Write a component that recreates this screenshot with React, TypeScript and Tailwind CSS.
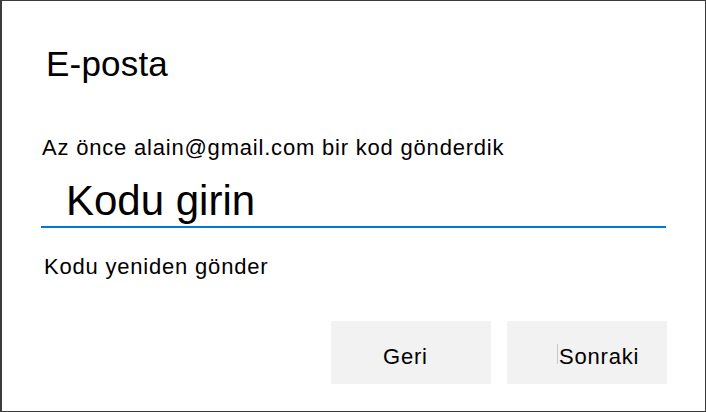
export default function App() {
  return (
    <div
      className="w-[706px] h-[412px] bg-white border border-l-2 border-[#3c3c3c] flex flex-col text-black"
      style={{ fontFamily: '"Liberation Sans", Arial, sans-serif' }}
    >
      <h1 className="ml-[44px] mt-[45px] text-[35px] leading-[35px] font-normal tracking-[0.2px]">
        E-posta
      </h1>

      <p className="ml-[40px] mt-[56px] text-[22px] leading-[22px] tracking-[0.8px]">
        Az önce alain@gmail.com bir kod gönderdik
      </p>

      {/* code field with the blue underline */}
      <div className="ml-[39px] mt-[21px] w-[625px] pb-[4px] border-b-2 border-[#0078d4]">
        <div className="pl-[25px] text-[42px] leading-[42px]">Kodu girin</div>
      </div>

      <a className="ml-[42px] mt-[28px] text-[22px] leading-[22px] tracking-[0.8px] cursor-pointer">
        Kodu yeniden gönder
      </a>

      <div className="mt-[43px] flex justify-end gap-4 pr-[38px]">
        <button className="w-[160px] h-[63px] bg-[#f2f2f2] pl-[52px] pt-[25px] flex items-start text-[22px] leading-[22px] tracking-[0.8px]">
          Geri
        </button>
        <button className="w-[160px] h-[63px] bg-[#f2f2f2] pl-[50px] pt-[25px] flex items-start text-[22px] leading-[22px] tracking-[0.8px]">
          <span className="inline-block w-px h-[20px] mt-[-2px] mr-[1px] bg-[#c8c8c8]" />
          Sonraki
        </button>
      </div>
    </div>
  );
}
